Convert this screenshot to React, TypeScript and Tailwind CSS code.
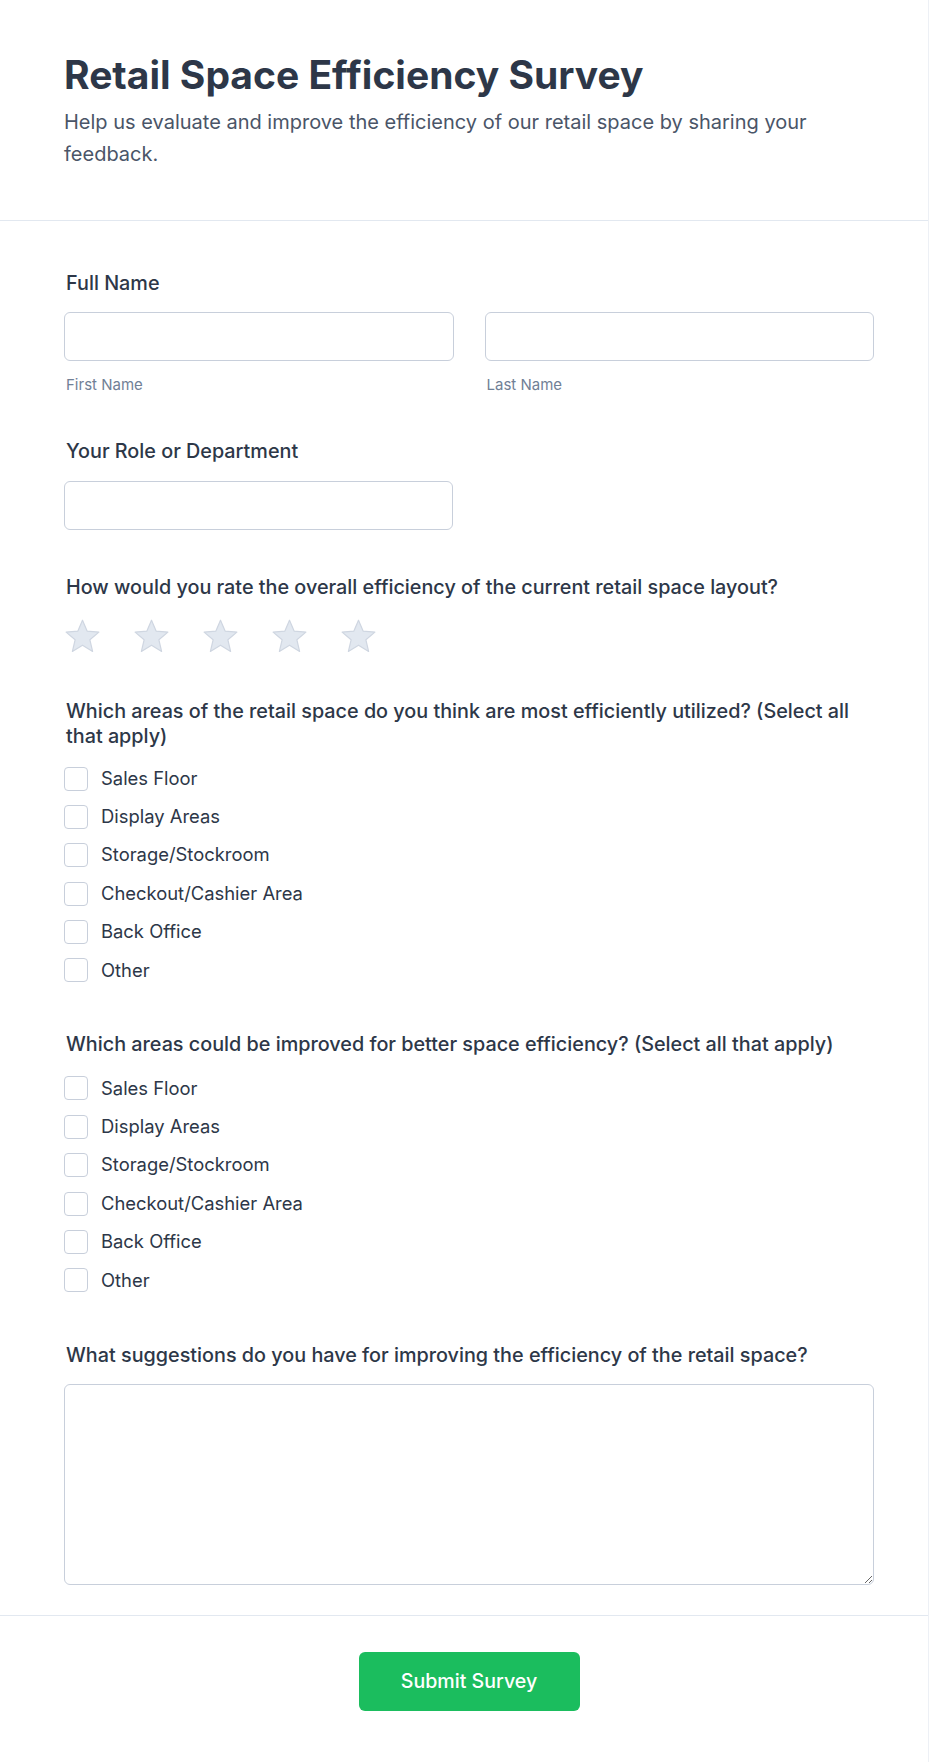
import React from 'react';

const areas = ['Sales Floor', 'Display Areas', 'Storage/Stockroom', 'Checkout/Cashier Area', 'Back Office', 'Other'];

const Star = () => (
  <svg width="37" height="35" viewBox="0 0 37 35" className="shrink-0">
    <polygon
      points="18.5,1.2 23.1,12.1 34.9,13.1 25.9,20.8 28.6,32.4 18.5,26.2 8.4,32.4 11.1,20.8 2.1,13.1 13.9,12.1"
      fill="#e2e8f0"
      stroke="#cfd6e1"
      strokeWidth="1.2"
      strokeLinejoin="round"
    />
  </svg>
);

const CheckList = ({ name }: { name: string }) => (
  <div className="flex flex-col gap-[14.4px]">
    {areas.map(a => (
      <label key={a} className="flex items-center gap-[13px] h-6">
        <input type="checkbox" name={name} className="appearance-none w-6 h-6 border border-[#c8cfdb] rounded-[4px] bg-white shrink-0" />
        <span className="text-[18.4px] text-[#2d3748]">{a}</span>
      </label>
    ))}
  </div>
);

const Question = ({ children }: { children: React.ReactNode }) => (
  <div className="text-[19.8px] leading-[25px] font-medium text-[#2d3748] px-0.5">{children}</div>
);

export default function App() {
  return (
    <div className="w-[929px] min-h-[1762px] bg-white border-r border-[#edf0f5] text-[#2d3748]" style={{ fontFamily: 'Inter, "Noto Sans", sans-serif' }}>
      {/* Header */}
      <div className="pl-16 pr-[54px] pt-[53px] pb-[50px] border-b border-[#e2e8f0]">
        <h1 className="text-[39px] leading-[44px] font-bold text-[#2d3748]">Retail Space Efficiency Survey</h1>
        <p className="mt-[9px] text-[20px] leading-[32px] text-[#4a5568]">
          Help us evaluate and improve the efficiency of our retail space by sharing your feedback.
        </p>
      </div>

      {/* Form */}
      <form className="pl-16 pr-[54px] pt-[50px] pb-[30px]">
        <div>
          <Question>Full Name</Question>
          <div className="mt-4 grid grid-cols-2 gap-[31px]">
            <div>
              <input type="text" className="w-full h-[49px] border border-[#c8cfdb] rounded-md bg-white" />
              <div className="mt-[13.5px] text-[15px] leading-5 text-[#718096] px-0.5">First Name</div>
            </div>
            <div>
              <input type="text" className="w-full h-[49px] border border-[#c8cfdb] rounded-md bg-white" />
              <div className="mt-[13.5px] text-[15px] leading-5 text-[#718096] px-0.5">Last Name</div>
            </div>
          </div>
        </div>

        <div className="mt-[44px]">
          <Question>Your Role or Department</Question>
          <input type="text" className="mt-[17px] w-[389px] h-[49px] border border-[#c8cfdb] rounded-md bg-white block" />
        </div>

        <div className="mt-[45px]">
          <Question>How would you rate the overall efficiency of the current retail space layout?</Question>
          <div className="mt-[19px] flex gap-[32px]">
            {[1, 2, 3, 4, 5].map(i => <Star key={i} />)}
          </div>
        </div>

        <div className="mt-[45px]">
          <Question>Which areas of the retail space do you think are most efficiently utilized? (Select all that apply)</Question>
          <div className="mt-[18px]">
            <CheckList name="efficient" />
          </div>
        </div>

        <div className="mt-[50px]">
          <Question>Which areas could be improved for better space efficiency? (Select all that apply)</Question>
          <div className="mt-[19px]">
            <CheckList name="improve" />
          </div>
        </div>

        <div className="mt-[51px]">
          <Question>What suggestions do you have for improving the efficiency of the retail space?</Question>
          <textarea className="mt-4 block w-full h-[201px] border border-[#c8cfdb] rounded-md bg-white" />
        </div>
      </form>

      {/* Footer */}
      <div className="border-t border-[#e2e8f0] pl-16 pr-[54px] pt-[36px] pb-[50px] flex justify-center">
        <button type="button" className="h-[59px] w-[221px] bg-[#1bbd5e] text-white text-[19.6px] font-medium rounded-md">
          Submit Survey
        </button>
      </div>
    </div>
  );
}
